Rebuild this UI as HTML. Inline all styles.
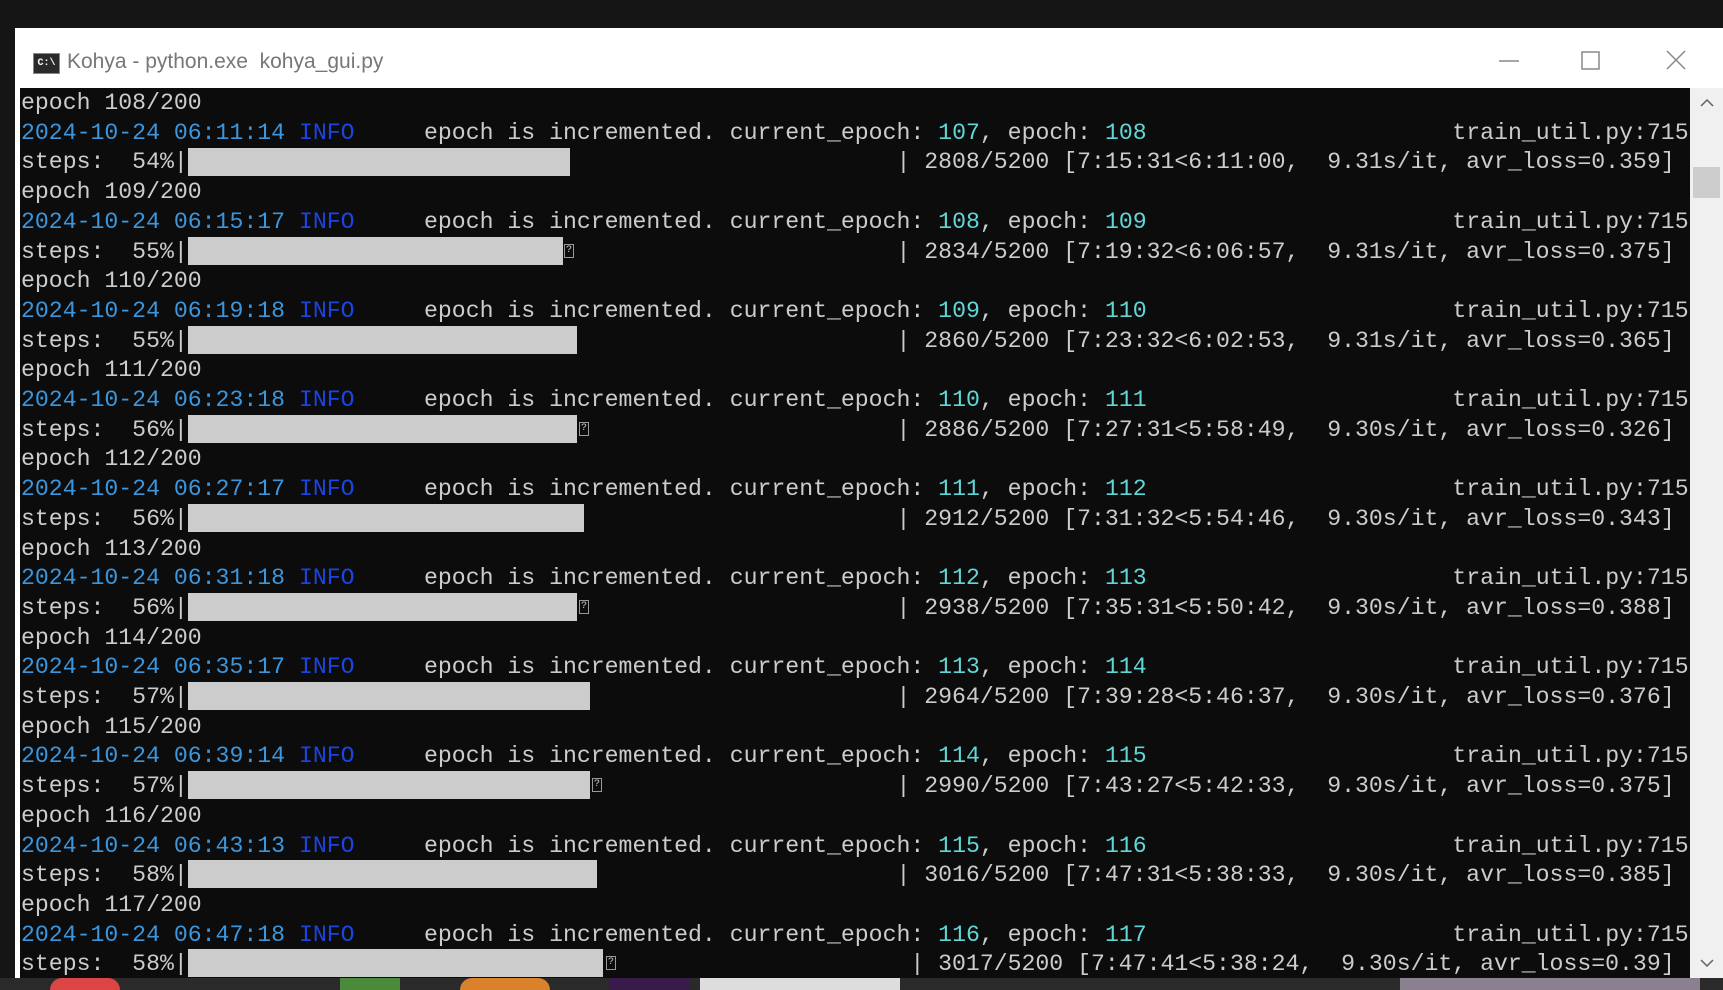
<!DOCTYPE html>
<html><head><meta charset="utf-8"><style>
html,body{margin:0;padding:0;width:1723px;height:990px;overflow:hidden;background:#151515;}
.win{position:absolute;left:15px;top:28px;width:1708px;height:950px;background:#fff;}
.topedge{position:absolute;left:15px;top:28px;width:1708px;height:5px;background:#b9b9b9;}
.title{position:absolute;left:67px;top:50px;font:21px "Liberation Sans",sans-serif;color:#777;}
.icon{position:absolute;left:33px;top:53px;width:27px;height:21px;background:#2a2a2a;border:1px solid #888;box-sizing:border-box;color:#fff;font:bold 10px "Liberation Mono",monospace;line-height:20px;text-align:center;}
.con{position:absolute;left:20px;top:88px;width:1670px;height:890px;background:#0c0c0c;overflow:hidden;}
.sb{position:absolute;left:1690px;top:88px;width:33px;height:890px;background:#f0f0f0;}
.thumb{position:absolute;left:1693px;top:167px;width:27px;height:31px;background:#cdcdcd;}
.l{position:absolute;left:1px;height:29.7px;line-height:29.7px;font:23.17px/29.7px "Liberation Mono",monospace;color:#cccccc;white-space:pre;margin-top:2px;}
.b{color:#3b96dd}.i{color:#1a45e0}.c{color:#61d6d6}
.bar{position:absolute;left:168px;height:28px;background:#cccccc;}
.q{position:absolute;width:10px;height:14px;border:1px solid #999;box-sizing:border-box;color:#ccc;font:10px "Liberation Mono",monospace;line-height:12px;text-align:center;}
.task{position:absolute;top:978px;height:12px;}
</style></head><body>
<div class="topedge"></div>
<div class="win"></div>
<div class="icon">C:\</div>
<div class="title">Kohya - python.exe&nbsp; kohya_gui.py</div>
<svg style="position:absolute;left:1495px;top:48px" width="200" height="26">
<line x1="4" y1="13" x2="24" y2="13" stroke="#888" stroke-width="1.5"/>
<rect x="87" y="4" width="17" height="17" fill="none" stroke="#888" stroke-width="1.5"/>
<line x1="172" y1="3" x2="190" y2="21" stroke="#888" stroke-width="1.5"/>
<line x1="190" y1="3" x2="172" y2="21" stroke="#888" stroke-width="1.5"/>
</svg>
<div class="con">
<div class="l" style="top:-1px">epoch 108/200</div>
<div class="l" style="top:28.7px"><span class="b">2024-10-24 06:11:14</span> <span class="i">INFO</span>     epoch is incremented. current_epoch: <span class="c">107</span>, epoch: <span class="c">108</span>                      train_util.py:715</div>
<div class="l" style="top:58.4px">steps:  54%|                                                   | 2808/5200 [7:15:31&lt;6:11:00,  9.31s/it, avr_loss=0.359]</div>
<div class="bar" style="top:60px;width:382px"></div>
<div class="l" style="top:88.1px">epoch 109/200</div>
<div class="l" style="top:117.8px"><span class="b">2024-10-24 06:15:17</span> <span class="i">INFO</span>     epoch is incremented. current_epoch: <span class="c">108</span>, epoch: <span class="c">109</span>                      train_util.py:715</div>
<div class="l" style="top:147.5px">steps:  55%|                                                   | 2834/5200 [7:19:32&lt;6:06:57,  9.31s/it, avr_loss=0.375]</div>
<div class="bar" style="top:149px;width:375px"></div><div class="q" style="left:544px;top:156px">?</div>
<div class="l" style="top:177.2px">epoch 110/200</div>
<div class="l" style="top:206.9px"><span class="b">2024-10-24 06:19:18</span> <span class="i">INFO</span>     epoch is incremented. current_epoch: <span class="c">109</span>, epoch: <span class="c">110</span>                      train_util.py:715</div>
<div class="l" style="top:236.6px">steps:  55%|                                                   | 2860/5200 [7:23:32&lt;6:02:53,  9.31s/it, avr_loss=0.365]</div>
<div class="bar" style="top:238px;width:389px"></div>
<div class="l" style="top:266.3px">epoch 111/200</div>
<div class="l" style="top:296px"><span class="b">2024-10-24 06:23:18</span> <span class="i">INFO</span>     epoch is incremented. current_epoch: <span class="c">110</span>, epoch: <span class="c">111</span>                      train_util.py:715</div>
<div class="l" style="top:325.7px">steps:  56%|                                                   | 2886/5200 [7:27:31&lt;5:58:49,  9.30s/it, avr_loss=0.326]</div>
<div class="bar" style="top:327px;width:389px"></div><div class="q" style="left:559px;top:334px">?</div>
<div class="l" style="top:355.4px">epoch 112/200</div>
<div class="l" style="top:385.1px"><span class="b">2024-10-24 06:27:17</span> <span class="i">INFO</span>     epoch is incremented. current_epoch: <span class="c">111</span>, epoch: <span class="c">112</span>                      train_util.py:715</div>
<div class="l" style="top:414.8px">steps:  56%|                                                   | 2912/5200 [7:31:32&lt;5:54:46,  9.30s/it, avr_loss=0.343]</div>
<div class="bar" style="top:416px;width:396px"></div>
<div class="l" style="top:444.5px">epoch 113/200</div>
<div class="l" style="top:474.2px"><span class="b">2024-10-24 06:31:18</span> <span class="i">INFO</span>     epoch is incremented. current_epoch: <span class="c">112</span>, epoch: <span class="c">113</span>                      train_util.py:715</div>
<div class="l" style="top:503.9px">steps:  56%|                                                   | 2938/5200 [7:35:31&lt;5:50:42,  9.30s/it, avr_loss=0.388]</div>
<div class="bar" style="top:505px;width:389px"></div><div class="q" style="left:559px;top:512px">?</div>
<div class="l" style="top:533.6px">epoch 114/200</div>
<div class="l" style="top:563.3px"><span class="b">2024-10-24 06:35:17</span> <span class="i">INFO</span>     epoch is incremented. current_epoch: <span class="c">113</span>, epoch: <span class="c">114</span>                      train_util.py:715</div>
<div class="l" style="top:593px">steps:  57%|                                                   | 2964/5200 [7:39:28&lt;5:46:37,  9.30s/it, avr_loss=0.376]</div>
<div class="bar" style="top:594px;width:402px"></div>
<div class="l" style="top:622.7px">epoch 115/200</div>
<div class="l" style="top:652.4px"><span class="b">2024-10-24 06:39:14</span> <span class="i">INFO</span>     epoch is incremented. current_epoch: <span class="c">114</span>, epoch: <span class="c">115</span>                      train_util.py:715</div>
<div class="l" style="top:682.1px">steps:  57%|                                                   | 2990/5200 [7:43:27&lt;5:42:33,  9.30s/it, avr_loss=0.375]</div>
<div class="bar" style="top:683px;width:402px"></div><div class="q" style="left:572px;top:690px">?</div>
<div class="l" style="top:711.8px">epoch 116/200</div>
<div class="l" style="top:741.5px"><span class="b">2024-10-24 06:43:13</span> <span class="i">INFO</span>     epoch is incremented. current_epoch: <span class="c">115</span>, epoch: <span class="c">116</span>                      train_util.py:715</div>
<div class="l" style="top:771.2px">steps:  58%|                                                   | 3016/5200 [7:47:31&lt;5:38:33,  9.30s/it, avr_loss=0.385]</div>
<div class="bar" style="top:772px;width:409px"></div>
<div class="l" style="top:800.9px">epoch 117/200</div>
<div class="l" style="top:830.6px"><span class="b">2024-10-24 06:47:18</span> <span class="i">INFO</span>     epoch is incremented. current_epoch: <span class="c">116</span>, epoch: <span class="c">117</span>                      train_util.py:715</div>
<div class="l" style="top:860.3px">steps:  58%|                                                    | 3017/5200 [7:47:41&lt;5:38:24,  9.30s/it, avr_loss=0.39]</div>
<div class="bar" style="top:861px;width:415px"></div><div class="q" style="left:586px;top:868px">?</div>
</div>
<div class="sb"></div>
<div class="thumb"></div>
<svg style="position:absolute;left:1697px;top:96px" width="20" height="14"><polyline points="4,10 10,4 16,10" fill="none" stroke="#606060" stroke-width="1.5"/></svg>
<svg style="position:absolute;left:1697px;top:956px" width="20" height="14"><polyline points="4,4 10,10 16,4" fill="none" stroke="#606060" stroke-width="1.5"/></svg>
<div class="task" style="left:0;width:1723px;background:#2a2a2a"></div>
<div class="task" style="left:50px;width:70px;background:#d44;border-radius:30px 30px 0 0"></div>
<div class="task" style="left:340px;width:60px;background:#4a8a3a"></div>
<div class="task" style="left:460px;width:90px;background:#d9822b;border-radius:40px 40px 0 0"></div>
<div class="task" style="left:610px;width:80px;background:#3a1a4a"></div>
<div class="task" style="left:700px;width:200px;background:#ddd"></div>
<div class="task" style="left:1400px;width:300px;background:#8a8090"></div>
</body></html>
